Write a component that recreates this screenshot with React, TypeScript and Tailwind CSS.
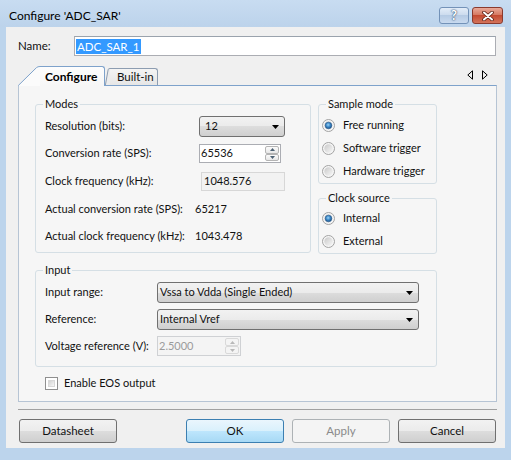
import React from "react";

function Combo({ className, text, textClass }: { className: string; text: string; textClass: string }) {
  return (
    <div
      className={
        className +
        " flex items-center justify-between border border-[#707070] rounded-[3px] bg-[linear-gradient(#f2f2f2,#ebebeb_50%,#dddddd_50%,#cfcfcf)] pr-[5px]"
      }
    >
      <span className={textClass}>{text}</span>
      <svg width="7" height="4" viewBox="0 0 7 4" className="block">
        <path d="M0 0H7L3.5 4Z" fill="#000" />
      </svg>
    </div>
  );
}

function SpinHalf({ up, disabled }: { up: boolean; disabled: boolean }) {
  return (
    <div
      className={
        disabled
          ? "flex-1 flex items-center justify-center border border-[#d9d9d9] rounded-[2px] bg-[#f4f4f4]"
          : "flex-1 flex items-center justify-center border border-[#b4b4b4] rounded-[2px] bg-[linear-gradient(#fbfbfb,#e7e7e7)]"
      }
    >
      <svg width="5" height="3" viewBox="0 0 5 3" className="block">
        {up ? (
          <path d="M0 3H5L2.5 0Z" fill={disabled ? "#b8b8b8" : "#4e6274"} />
        ) : (
          <path d="M0 0H5L2.5 3Z" fill={disabled ? "#b8b8b8" : "#4e6274"} />
        )}
      </svg>
    </div>
  );
}

function Radio({ checked }: { checked: boolean }) {
  return (
    <svg width="13" height="13" viewBox="0 0 13 13" className="block shrink-0">
      <defs>
        <linearGradient id="rg1" x1="0" y1="0" x2="1" y2="1">
          <stop offset="0" stopColor="#c9c9c9" />
          <stop offset="1" stopColor="#f7f7f7" />
        </linearGradient>
        <radialGradient id="rg2" cx="0.45" cy="0.4" r="0.6">
          <stop offset="0" stopColor="#9fd4f5" />
          <stop offset="0.5" stopColor="#3f8ccb" />
          <stop offset="1" stopColor="#1a4f86" />
        </radialGradient>
      </defs>
      <circle cx="6.5" cy="6.5" r="6" fill="#f5f5f5" stroke="#a3a3a3" />
      <circle cx="6.5" cy="6.5" r="4.2" fill="url(#rg1)" />
      {checked && <circle cx="6.5" cy="6.5" r="3.3" fill="url(#rg2)" stroke="#2a5c8e" strokeWidth="0.6" />}
    </svg>
  );
}

function RadioRow({ label, checked }: { label: string; checked: boolean }) {
  return (
    <div className="h-[23px] flex items-center pl-[3px] gap-[8px]">
      <Radio checked={checked} />
      <span>{label}</span>
    </div>
  );
}

export default function App() {
  return (
    <div className="w-[511px] h-[460px] flex flex-col bg-[#bcd4ec] font-[family-name:Lato,'Liberation_Sans',sans-serif] text-[11px] text-[#111] overflow-hidden">
      {/* Title bar */}
      <div className="h-[27px] shrink-0 flex bg-linear-to-b from-[#c8dcf1] to-[#bcd3eb] pl-[9px] pr-[8px]">
        <span className="flex-1 pt-[7px] text-[12px] text-black">Configure 'ADC_SAR'</span>
        <div className="flex gap-[3px] pt-[7px]">
          <div className="w-[30px] h-[17px] rounded-[3px] border border-[#7392b8] bg-[linear-gradient(#e3edf8,#cddcee_45%,#b6cbe4_50%,#c9daef)] flex items-center justify-center">
            <span className="text-white font-bold text-[13px] leading-none [text-shadow:0_0_2px_#27456a,0_0_1px_#27456a]">?</span>
          </div>
          <div className="w-[31px] h-[17px] rounded-[3px] border border-[#8a3a2e] bg-[linear-gradient(#e9a999,#d67a63_45%,#c44a31_50%,#d3735a)] flex items-center justify-center">
            <svg width="12" height="10" viewBox="0 0 12 10" className="block">
              <path d="M2 1.5L10 8.5M10 1.5L2 8.5" stroke="#5b1d12" strokeWidth="3.6" strokeLinecap="round" />
              <path d="M2 1.5L10 8.5M10 1.5L2 8.5" stroke="#ffffff" strokeWidth="2" strokeLinecap="round" />
            </svg>
          </div>
        </div>
      </div>

      {/* Client area */}
      <div className="ml-[6px] w-[499px] h-[421px] shrink-0 bg-[#f0f0f0] flex flex-col">
        {/* Name row */}
        <div className="mt-[9px] h-[20px] flex items-center">
          <span className="pl-[12px] w-[68px] text-[11.5px]">Name:</span>
          <div className="w-[422px] h-[20px] border border-[#abadb3] border-t-[#9aa3ad] bg-white flex items-center pl-[1px]">
            <span className="bg-[#3399ff] text-white px-[1px] leading-[15px] text-[11.5px]">ADC_SAR_1</span>
          </div>
        </div>

        {/* Tabs + panel */}
        <div className="mt-[9px] ml-[12px] w-[479px] flex flex-col">
          <div className="flex h-[21px] items-end -mb-px relative z-10">
            <svg width="22" height="20" viewBox="0 0 22 20" className="block shrink-0">
              <path d="M0 20 L18.5 1.6 Q19.8 0.5 22 0.5 L22 20 Z" fill="#fbfbfb" />
              <path d="M0.3 19.5 L18.5 1.6 Q19.8 0.5 22 0.5" fill="none" stroke="#7ea2cb" />
            </svg>
            <div className="h-[20px] w-[65px] border-t border-r border-[#7ea2cb] rounded-tr-[3px] bg-linear-to-b from-[#fdfdfd] to-[#f6f6f6] flex items-center pl-[5px] font-bold text-[12px] text-black">
              Configure
            </div>
            <svg width="5" height="17" viewBox="0 0 5 17" className="block shrink-0 mb-px">
              <path d="M0 17 L3.2 1.3 Q3.8 0.5 5 0.5 L5 17 Z" fill="#ececec" />
              <path d="M0.4 17 L3.2 1.3 Q3.8 0.5 5 0.5" fill="none" stroke="#8d9db1" />
            </svg>
            <div className="h-[17px] mb-px w-[48px] border-t border-r border-[#8d9db1] rounded-tr-[3px] bg-linear-to-b from-[#f4f4f4] to-[#e6e6e6] flex items-center pl-[7px] text-[11.5px] text-[#111]">
              Built-in
            </div>
            <div className="ml-auto mr-[9px] self-start mt-[5px] flex gap-[9px]">
              <svg width="6" height="10" viewBox="0 0 6 10" className="block">
                <path d="M5.5 0.8 L0.8 5 L5.5 9.2 Z" fill="none" stroke="#000" />
              </svg>
              <svg width="6" height="10" viewBox="0 0 6 10" className="block">
                <path d="M0.5 0.8 L5.2 5 L0.5 9.2 Z" fill="none" stroke="#000" />
              </svg>
            </div>
          </div>

          <div className="h-[317px] border border-[#b6c4d4] border-t-[#7ea2cb] bg-[#f6f6f6] pl-[16px] pt-[10px] flex flex-col">
            <div className="flex gap-[7px] items-start">
              {/* Modes */}
              <fieldset className="w-[276px] border border-[#d5dfe5] rounded-[3px]">
                <legend className="ml-[7px] px-[2px] leading-[16px]">Modes</legend>
                <div className="pl-[9px] pt-[4px] pb-[6px] flex flex-col">
                  <div className="h-[21px] flex items-center">
                    <span className="w-[154px]">Resolution (bits):</span>
                    <Combo className="w-[86px] h-[21px]" text="12" textClass="pl-[5px]" />
                  </div>
                  <div className="mt-[7px] h-[19px] flex items-center">
                    <span className="w-[154px]">Conversion rate (SPS):</span>
                    <div className="w-[82px] h-[19px] border border-[#abadb3] bg-white flex items-stretch">
                      <span className="flex-1 pl-[1px] flex items-center">65536</span>
                      <div className="w-[14px] flex flex-col py-px mr-px">
                        <SpinHalf up={true} disabled={false} />
                        <SpinHalf up={false} disabled={false} />
                      </div>
                    </div>
                  </div>
                  <div className="mt-[9px] h-[19px] flex items-center">
                    <span className="w-[156px]">Clock frequency (kHz):</span>
                    <div className="w-[84px] h-[19px] border border-[#d7d7d7] bg-[#f2f2f2] flex items-center pl-[2px]">
                      1048.576
                    </div>
                  </div>
                  <div className="mt-[9px] h-[19px] flex items-center">
                    <span className="w-[150px]">Actual conversion rate (SPS):</span>
                    <span>65217</span>
                  </div>
                  <div className="mt-[8px] h-[19px] flex items-center">
                    <span className="w-[150px]">Actual clock frequency (kHz):</span>
                    <span>1043.478</span>
                  </div>
                </div>
              </fieldset>

              {/* Right column */}
              <div className="w-[119px] flex flex-col">
                <fieldset className="border border-[#d5dfe5] rounded-[3px]">
                  <legend className="ml-[7px] px-[2px] leading-[16px]">Sample mode</legend>
                  <div className="pt-[2px] flex flex-col">
                    <RadioRow label="Free running" checked={true} />
                    <RadioRow label="Software trigger" checked={false} />
                    <RadioRow label="Hardware trigger" checked={false} />
                  </div>
                </fieldset>
                <fieldset className="mt-[6px] border border-[#d5dfe5] rounded-[3px]">
                  <legend className="ml-[7px] px-[2px] leading-[16px]">Clock source</legend>
                  <div className="pt-[1px] flex flex-col">
                    <RadioRow label="Internal" checked={true} />
                    <RadioRow label="External" checked={false} />
                  </div>
                </fieldset>
              </div>
            </div>

            {/* Input */}
            <fieldset className="mt-[8px] w-[402px] border border-[#d5dfe5] rounded-[3px]">
              <legend className="ml-[7px] px-[2px] leading-[16px]">Input</legend>
              <div className="pl-[9px] pt-[4px] pb-[10px] flex flex-col">
                <div className="h-[21px] flex items-center">
                  <span className="w-[112px]">Input range:</span>
                  <Combo className="w-[262px] h-[21px]" text="Vssa to Vdda (Single Ended)" textClass="pl-[2px]" />
                </div>
                <div className="mt-[6px] h-[21px] flex items-center">
                  <span className="w-[112px]">Reference:</span>
                  <Combo className="w-[262px] h-[21px]" text="Internal Vref" textClass="pl-[2px]" />
                </div>
                <div className="mt-[6px] h-[20px] flex items-center">
                  <span className="w-[112px]">Voltage reference (V):</span>
                  <div className="w-[84px] h-[20px] border border-[#cfd1d4] bg-[#f4f4f4] flex items-stretch">
                    <span className="flex-1 pl-[1px] flex items-center text-[#9b9b9b]">2.5000</span>
                    <div className="w-[14px] flex flex-col py-px mr-px">
                      <SpinHalf up={true} disabled={true} />
                      <SpinHalf up={false} disabled={true} />
                    </div>
                  </div>
                </div>
              </div>
            </fieldset>

            {/* Checkbox */}
            <div className="mt-[8px] h-[16px] flex items-center pl-[10px] gap-[6px]">
              <div className="w-[13px] h-[13px] border border-[#8f8f8f] bg-white p-[2px]">
                <div className="w-full h-full bg-linear-to-br from-[#d2d2d2] to-[#f7f7f7] border border-[#d8d8d8]" />
              </div>
              <span>Enable EOS output</span>
            </div>
          </div>
        </div>

        {/* Separator */}
        <div className="mt-[7px] ml-[12px] w-[479px] h-px bg-[#a0a0a0]" />

        {/* Buttons */}
        <div className="mt-[9px] h-[24px] flex pl-[13px] text-[11.5px]">
          <div className="w-[98px] h-[24px] rounded-[3px] border border-[#707070] bg-[linear-gradient(#f2f2f2,#ebebeb_50%,#dddddd_50%,#cfcfcf)] flex items-center justify-center">
            Datasheet
          </div>
          <div className="ml-[69px] w-[98px] h-[24px] rounded-[3px] border border-[#3c7fb1] bg-[linear-gradient(#eaf6fd,#d9f0fc_50%,#bee6fd_50%,#a7d9f5)] flex items-center justify-center">
            OK
          </div>
          <div className="ml-[8px] w-[98px] h-[24px] rounded-[3px] border border-[#adb2b5] bg-[#f4f4f4] flex items-center justify-center text-[#8a8a8a]">
            Apply
          </div>
          <div className="ml-[8px] w-[98px] h-[24px] rounded-[3px] border border-[#707070] bg-[linear-gradient(#f2f2f2,#ebebeb_50%,#dddddd_50%,#cfcfcf)] flex items-center justify-center">
            Cancel
          </div>
        </div>
      </div>
    </div>
  );
}
